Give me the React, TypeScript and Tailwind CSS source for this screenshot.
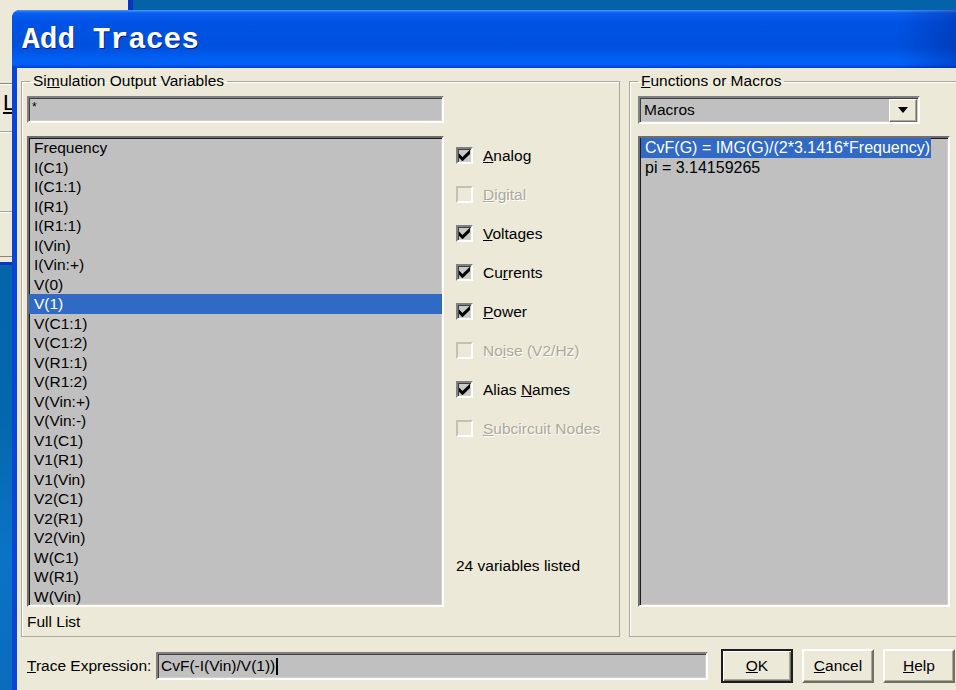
import React from 'react';

const VARIABLES = [
  'Frequency', 'I(C1)', 'I(C1:1)', 'I(R1)', 'I(R1:1)', 'I(Vin)', 'I(Vin:+)', 'V(0)',
  'V(1)', 'V(C1:1)', 'V(C1:2)', 'V(R1:1)', 'V(R1:2)', 'V(Vin:+)', 'V(Vin:-)', 'V1(C1)',
  'V1(R1)', 'V1(Vin)', 'V2(C1)', 'V2(R1)', 'V2(Vin)', 'W(C1)', 'W(R1)', 'W(Vin)',
];

const FILTERS = [
  { pre: '', key: 'A', post: 'nalog', checked: true },
  { pre: '', key: 'D', post: 'igital', disabled: true },
  { pre: '', key: 'V', post: 'oltages', checked: true },
  { pre: 'Cu', key: 'r', post: 'rents', checked: true },
  { pre: '', key: 'P', post: 'ower', checked: true },
  { pre: 'No', key: 'i', post: 'se (V2/Hz)', disabled: true },
  { pre: 'Alias ', key: 'N', post: 'ames', checked: true },
  { pre: '', key: 'S', post: 'ubcircuit Nodes', disabled: true },
];

const sunken =
  'border-2 border-t-[#808080] border-l-[#808080] border-b-white border-r-white shadow-[inset_1px_1px_0_#404040,inset_-1px_-1px_0_#d4d0c8]';
const listBorder =
  'border-2 border-t-[#6e6e6e] border-l-[#6e6e6e] border-b-white border-r-white shadow-[inset_1px_1px_0_#1c1c1c,inset_-1px_-1px_0_#d4d0c8]';
const raised =
  'border border-t-white border-l-white border-b-[#716f64] border-r-[#716f64] shadow-[inset_-1px_-1px_0_#aca899]';

function CheckBox({ checked, disabled }: { checked?: boolean; disabled?: boolean }) {
  return (
    <span
      className={`w-[17px] h-[17px] flex items-center justify-center ${
        disabled
          ? 'border-2 border-t-[#c4c1b4] border-l-[#c4c1b4] border-b-white border-r-white bg-[#ece9d8]'
          : `${sunken} bg-[#c9c9c6]`
      }`}
    >
      {checked && (
        <svg width="11" height="11" viewBox="0 0 7 7">
          <polygon points="0,2.2 2.2,4.4 7,-0.2 7,2.6 2.2,7.2 0,5" fill="#000" />
        </svg>
      )}
    </span>
  );
}

function Button({ label, rest, primary }: { label: string; rest: string; primary?: boolean }) {
  return (
    <button
      className={`w-[72px] h-[34px] bg-[#ece9d8] flex items-center justify-center ${
        primary
          ? 'border-2 border-[#1c1c1c] shadow-[inset_1px_1px_0_#fff,inset_-1px_-1px_0_#716f64,inset_-2px_-2px_0_#aca899]'
          : 'border-2 border-t-white border-l-white border-b-[#716f64] border-r-[#716f64] shadow-[inset_-1px_-1px_0_#aca899]'
      }`}
    >
      <span>
        <u>{label}</u>
        {rest}
      </span>
    </button>
  );
}

function Legend({ children }: { children: React.ReactNode }) {
  return <legend className="ml-[8px] px-[3px] leading-[18px]">{children}</legend>;
}

export default function App() {
  return (
    <div className="relative w-[956px] h-[690px] overflow-hidden bg-[linear-gradient(180deg,#0463a8_0%,#0466ad_60%,#0b73c6_80%,#0a6cbd_100%)] font-['Liberation_Sans',Arial,sans-serif] text-[15.5px] text-black">
      {/* window behind the dialog */}
      <div className="absolute left-0 top-0 w-[133px] h-[265px] bg-[#ece9d8] border-r-[5px] border-b-[3px] border-[#0a35c4] flex flex-col">
        <div className="mt-[83px] border-t border-[#8a877a] border-b border-b-white" />
        <div className="pl-[3px] pt-[6px] text-[22px] leading-[24px]">
          <u>L</u>
        </div>
        <div className="mt-[16px] border-t border-[#aca899] border-b border-b-white" />
        <div className="mt-[78px] border-t border-[#aca899] border-b border-b-white" />
        <div className="mt-[43px] border-t border-[#8a877a]" />
      </div>

      {/* Add Traces dialog */}
      <div className="absolute left-[12px] top-[10px] w-[952px] h-[690px] bg-[#0a44d8] rounded-t-[8px] flex flex-col">
        <div className="h-[58px] rounded-t-[8px] flex items-center pl-[10px] pt-[4px] bg-[linear-gradient(90deg,transparent_0%,transparent_93%,rgba(0,20,120,0.35)_100%),linear-gradient(180deg,#4a96fa_0%,#0a5ef0_5%,#0053e4_22%,#0050dd_62%,#0061f5_86%,#0060f4_94%,#003ccd_100%)]">
          <span className="font-['Liberation_Mono',monospace] font-bold text-[29.5px] leading-none text-white [text-shadow:1px_1px_0_#0a1b78]">
            Add Traces
          </span>
        </div>

        <div className="ml-[5px] flex-1 bg-[#ece9d8] flex flex-col pl-[4px] pt-[4px]">
          <div className="flex">
            {/* Simulation Output Variables */}
            <fieldset className="w-[599px] border border-[#aca899] shadow-[inset_1px_1px_0_#fff] p-0">
              <Legend>
                Si<u>m</u>ulation Output Variables
              </Legend>
              <div className="flex pl-[5px] pt-[6px]">
                <div className="w-[417px] flex flex-col">
                  <div className={`h-[27px] bg-[#c0c0c0] ${sunken} pl-[3px] leading-[18px] text-[12px]`}>*</div>
                  <div className={`mt-[13px] h-[471px] bg-[#c0c0c0] ${listBorder} flex flex-col`}>
                    {VARIABLES.map((v) => (
                      <div
                        key={v}
                        className={`h-[19.5px] leading-[19.5px] pl-[5px] ${
                          v === 'V(1)' ? 'bg-[#316ac5] text-white' : ''
                        }`}
                      >
                        {v}
                      </div>
                    ))}
                  </div>
                  <div className="h-[29px] flex items-center">Full List</div>
                </div>

                <div className="ml-[12px] pt-[40px] flex flex-col">
                  {FILTERS.map((f) => (
                    <div key={f.key + f.post} className="h-[39px] flex items-center gap-[10px]">
                      <CheckBox checked={f.checked} disabled={f.disabled} />
                      <span className={f.disabled ? 'text-[#aca899] [text-shadow:1px_1px_0_#fff]' : ''}>
                        {f.pre}
                        <u>{f.key}</u>
                        {f.post}
                      </span>
                    </div>
                  ))}
                  <div className="mt-[106px]">24 variables listed</div>
                </div>
              </div>
            </fieldset>

            {/* Functions or Macros */}
            <fieldset className="ml-[9px] w-[330px] border border-[#aca899] shadow-[inset_1px_1px_0_#fff] p-0">
              <Legend>
                <u>F</u>unctions or Macros
              </Legend>
              <div className="flex flex-col pl-[8px] pt-[6px]">
                <div className={`w-[282px] h-[28px] bg-[#c0c0c0] ${sunken} flex items-center pl-[4px] pr-[1px]`}>
                  <span className="flex-1">Macros</span>
                  <span className={`w-[28px] h-[23px] bg-[#ece9d8] ${raised} flex items-center justify-center`}>
                    <svg width="10" height="6" viewBox="0 0 10 6">
                      <polygon points="0,0 10,0 5,6" fill="#000" />
                    </svg>
                  </span>
                </div>
                <div className={`mt-[12px] w-[312px] h-[471px] bg-[#c0c0c0] ${listBorder} flex flex-col items-start pl-[1px] text-[16px]`}>
                  <div className="h-[19.5px] leading-[19.5px] pl-[4px] pr-[1px] bg-[#316ac5] text-white whitespace-nowrap">
                    CvF(G) = IMG(G)/(2*3.1416*Frequency)
                  </div>
                  <div className="h-[19.5px] leading-[19.5px] pl-[4px]">pi = 3.14159265</div>
                </div>
                <div className="h-[29px]" />
              </div>
            </fieldset>
          </div>

          {/* expression row */}
          <div className="mt-[12px] flex items-center h-[34px]">
            <span className="ml-[6px] w-[129px] whitespace-nowrap">
              <u>T</u>race Expression:
            </span>
            <div className={`w-[552px] h-[28px] bg-[#c0c0c0] ${sunken} flex items-center pl-[3px]`}>
              <span>CvF(-I(Vin)/V(1))</span>
              <span className="ml-[1px] w-[1.5px] h-[17px] bg-black" />
            </div>
            <div className="ml-[13px] flex gap-[9px]">
              <Button label="O" rest="K" primary />
              <Button label="C" rest="ancel" />
              <Button label="H" rest="elp" />
            </div>
          </div>
        </div>
      </div>
    </div>
  );
}
